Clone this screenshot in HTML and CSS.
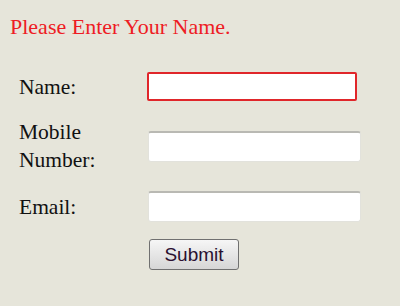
FILE: index.html
```html
<!DOCTYPE html>
<html lang="en">
<head>
  <meta charset="UTF-8" />
  <title>Contact Form</title>
  <link rel="stylesheet" href="styles.css">
</head>
<body>

  <p class="form-error">Please Enter Your Name.</p>

  <form class="contact-form" onsubmit="return false;">
    <label class="field-label" for="name">Name:</label>
    <input type="text" id="name" class="field-input field-invalid" />

    <label class="field-label" for="mobile">Mobile<br>Number:</label>
    <input type="text" id="mobile" class="field-input" />

    <label class="field-label" for="email">Email:</label>
    <input type="text" id="email" class="field-input" />

    <span></span>
    <button type="submit" class="submit-button">Submit</button>
  </form>

</body>
</html>
```

FILE: styles.css
```css
html, body {
  margin: 0;
  padding: 0;
  background: #e6e5da;
  font-family: "Liberation Serif", "Times New Roman", serif;
  color: #111;
}

body {
  padding: 15px 0 0 10px;
}

/* error message */
.form-error {
  margin: 0;
  font-size: 22px;
  line-height: 24px;
  color: #ee1c24;
}

/* form grid */
.contact-form {
  display: grid;
  grid-template-columns: 129px auto;
  align-items: center;
  justify-items: start;
  row-gap: 17px;
  margin: 33px 0 0 9px;
}

.field-label {
  font-size: 21.5px;
  line-height: 28px;
}

.field-input {
  box-sizing: border-box;
  width: 213px;
  height: 31px;
  margin: 0;
  padding: 0 4px;
  background: #fff;
  border: 1px solid #e2e2dc;
  border-top: 2px solid #b9b9b3;
  border-radius: 3px;
  outline: none;
  font-size: 16px;
}

.field-input.field-invalid {
  width: 210px;
  height: 29px;
  margin-left: -1px;
  border: 2px solid #e0262a;
  border-radius: 2px;
}

.submit-button {
  box-sizing: border-box;
  width: 90px;
  height: 31px;
  margin: 0 0 0 1px;
  padding: 0;
  background: linear-gradient(#f6f6f6, #e6e6e6 50%, #d6d6d6);
  border: 1px solid #707070;
  border-radius: 3px;
  font-family: "Liberation Sans", Arial, sans-serif;
  font-size: 19px;
  color: #2a1030;
  cursor: pointer;
}
```
